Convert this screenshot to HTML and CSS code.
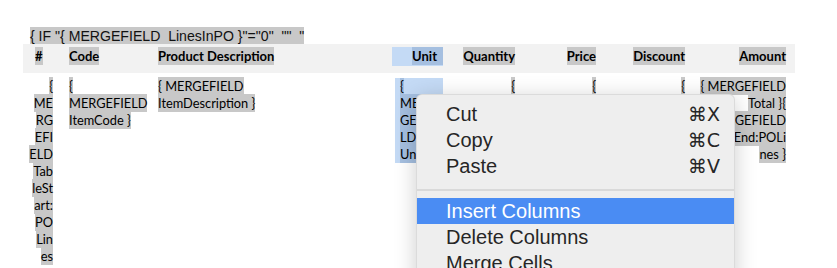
FILE: index.html
```html
<!DOCTYPE html>
<html lang="en">
<head>
    <meta charset="UTF-8">
    <title>PO template - table</title>
    <link rel="stylesheet" href="styles.css">
</head>
<body>
    <div class="doc">
        <p class="if-line"><span class="hl">{ IF "{ MERGEFIELD&nbsp; LinesInPO }"="0"&nbsp; ""&nbsp; "</span></p>

        <div class="po-table">
            <!-- header row -->
            <div class="th col-num"><span class="hl">#</span></div>
            <div class="th col-left"><span class="hl">Code</span></div>
            <div class="th col-left"><span class="hl">Product Description</span></div>
            <div class="th col-unit"><div class="sel"><span class="hl-sel">Unit</span></div></div>
            <div class="th col-right"><span class="hl">Quantity</span></div>
            <div class="th col-right"><span class="hl">Price</span></div>
            <div class="th col-right"><span class="hl">Discount</span></div>
            <div class="th col-amount"><span class="hl">Amount</span></div>

            <!-- merge row -->
            <div class="td col-num"><span class="hl">{<br>ME<br>RG<br>EFI<br>ELD<br>Tab<br>leSt<br>art:<br>PO<br>Lin<br>es</span></div>
            <div class="td col-left"><span class="hl">{<br>MERGEFIELD<br>ItemCode }</span></div>
            <div class="td col-left"><span class="hl">{ MERGEFIELD<br>ItemDescription }</span></div>
            <div class="td col-unit"><div class="sel"><span class="hl-sel">{<br>MER<br>GEFIE<br>LD<br>Unit }</span></div></div>
            <div class="td col-right"><span class="hl">{</span></div>
            <div class="td col-right"><span class="hl">{</span></div>
            <div class="td col-right"><span class="hl">{</span></div>
            <div class="td col-amount"><span class="hl">{ MERGEFIELD<br>Total }{<br>{ MERGEFIELD<br>TableEnd:POLi<br>nes }</span></div>
        </div>
    </div>

    <!-- context menu -->
    <div class="menu">
        <div class="menu-item"><span>Cut</span><span class="key">&#8984;X</span></div>
        <div class="menu-item"><span>Copy</span><span class="key">&#8984;C</span></div>
        <div class="menu-item"><span>Paste</span><span class="key">&#8984;V</span></div>
        <div class="menu-sep"></div>
        <div class="menu-item active"><span>Insert Columns</span></div>
        <div class="menu-item"><span>Delete Columns</span></div>
        <div class="menu-item"><span>Merge Cells</span></div>
    </div>
</body>
</html>
```

FILE: styles.css
```css
:root {
    --field-gray: #c8c8c8;
    --band-gray: #f2f2f2;
    --sel-light: #c4daf5;
    --sel-dark: #a5bfe0;
    --menu-blue: #4a8cf3;
}

* {
    margin: 0;
    padding: 0;
    box-sizing: border-box;
}

body {
    background: white;
    color: #111;
    overflow: hidden;
}

.doc {
    padding-top: 28px;
}

.if-line {
    margin-left: 30px;
    font-family: 'Liberation Sans', Arial, sans-serif;
    font-size: 14.1px;
    line-height: 16px;
    white-space: pre;
}

.hl {
    background: var(--field-gray);
    padding: 1px 0;
}

.hl-sel {
    background: var(--sel-dark);
    padding: 1px 0;
}

/* table */
.po-table {
    display: grid;
    grid-template-columns: 40px 89px 240px 51px 78px 81px 89px 104px;
    width: 772px;
    margin-left: 23px;
    font-family: 'Lato', 'Liberation Sans', sans-serif;
    color: #000;
}

.th {
    background: var(--band-gray);
    font-weight: bold;
    font-size: 13px;
    line-height: 19px;
    padding-top: 3px;
    padding-bottom: 7px;
}

.td {
    font-size: 12.8px;
    line-height: 17px;
    padding-top: 5px;
}

.col-num {
    text-align: right;
    padding-right: 10px;
}

.th.col-num {
    text-align: left;
    padding-left: 12px;
}

.col-left {
    padding-left: 6px;
}

.col-right {
    text-align: right;
    padding-right: 6px;
}

.col-amount {
    text-align: right;
    padding-right: 9px;
}

.th.col-unit .sel {
    background: var(--sel-light);
    text-align: right;
}

.th.col-unit .hl-sel {
    padding-right: 6px;
}

.td.col-unit {
    padding-left: 3px;
}

.td.col-unit .sel {
    background: var(--sel-light);
    padding-left: 5px;
    height: 85px;
    overflow: hidden;
}

/* context menu */
.menu {
    position: absolute;
    left: 416px;
    top: 94px;
    width: 319px;
    height: 200px;
    background: #eeeeee;
    border: 1px solid rgba(0,0,0,0.08);
    border-radius: 6px;
    box-shadow: 0 4px 22px rgba(0,0,0,0.2);
    padding-top: 6px;
    font-family: 'Liberation Sans', 'DejaVu Sans', sans-serif;
    font-size: 20px;
    color: #262626;
}

.menu-item {
    display: flex;
    justify-content: space-between;
    align-items: center;
    height: 26px;
    padding: 0 14px 0 29px;
}

.menu-item .key {
    font-family: 'DejaVu Sans', sans-serif;
    font-size: 19px;
}

.menu-item.active {
    background: var(--menu-blue);
    color: white;
}

.menu-sep {
    height: 2px;
    background: #d9d9d9;
    margin: 10px 0 7px;
}
```
